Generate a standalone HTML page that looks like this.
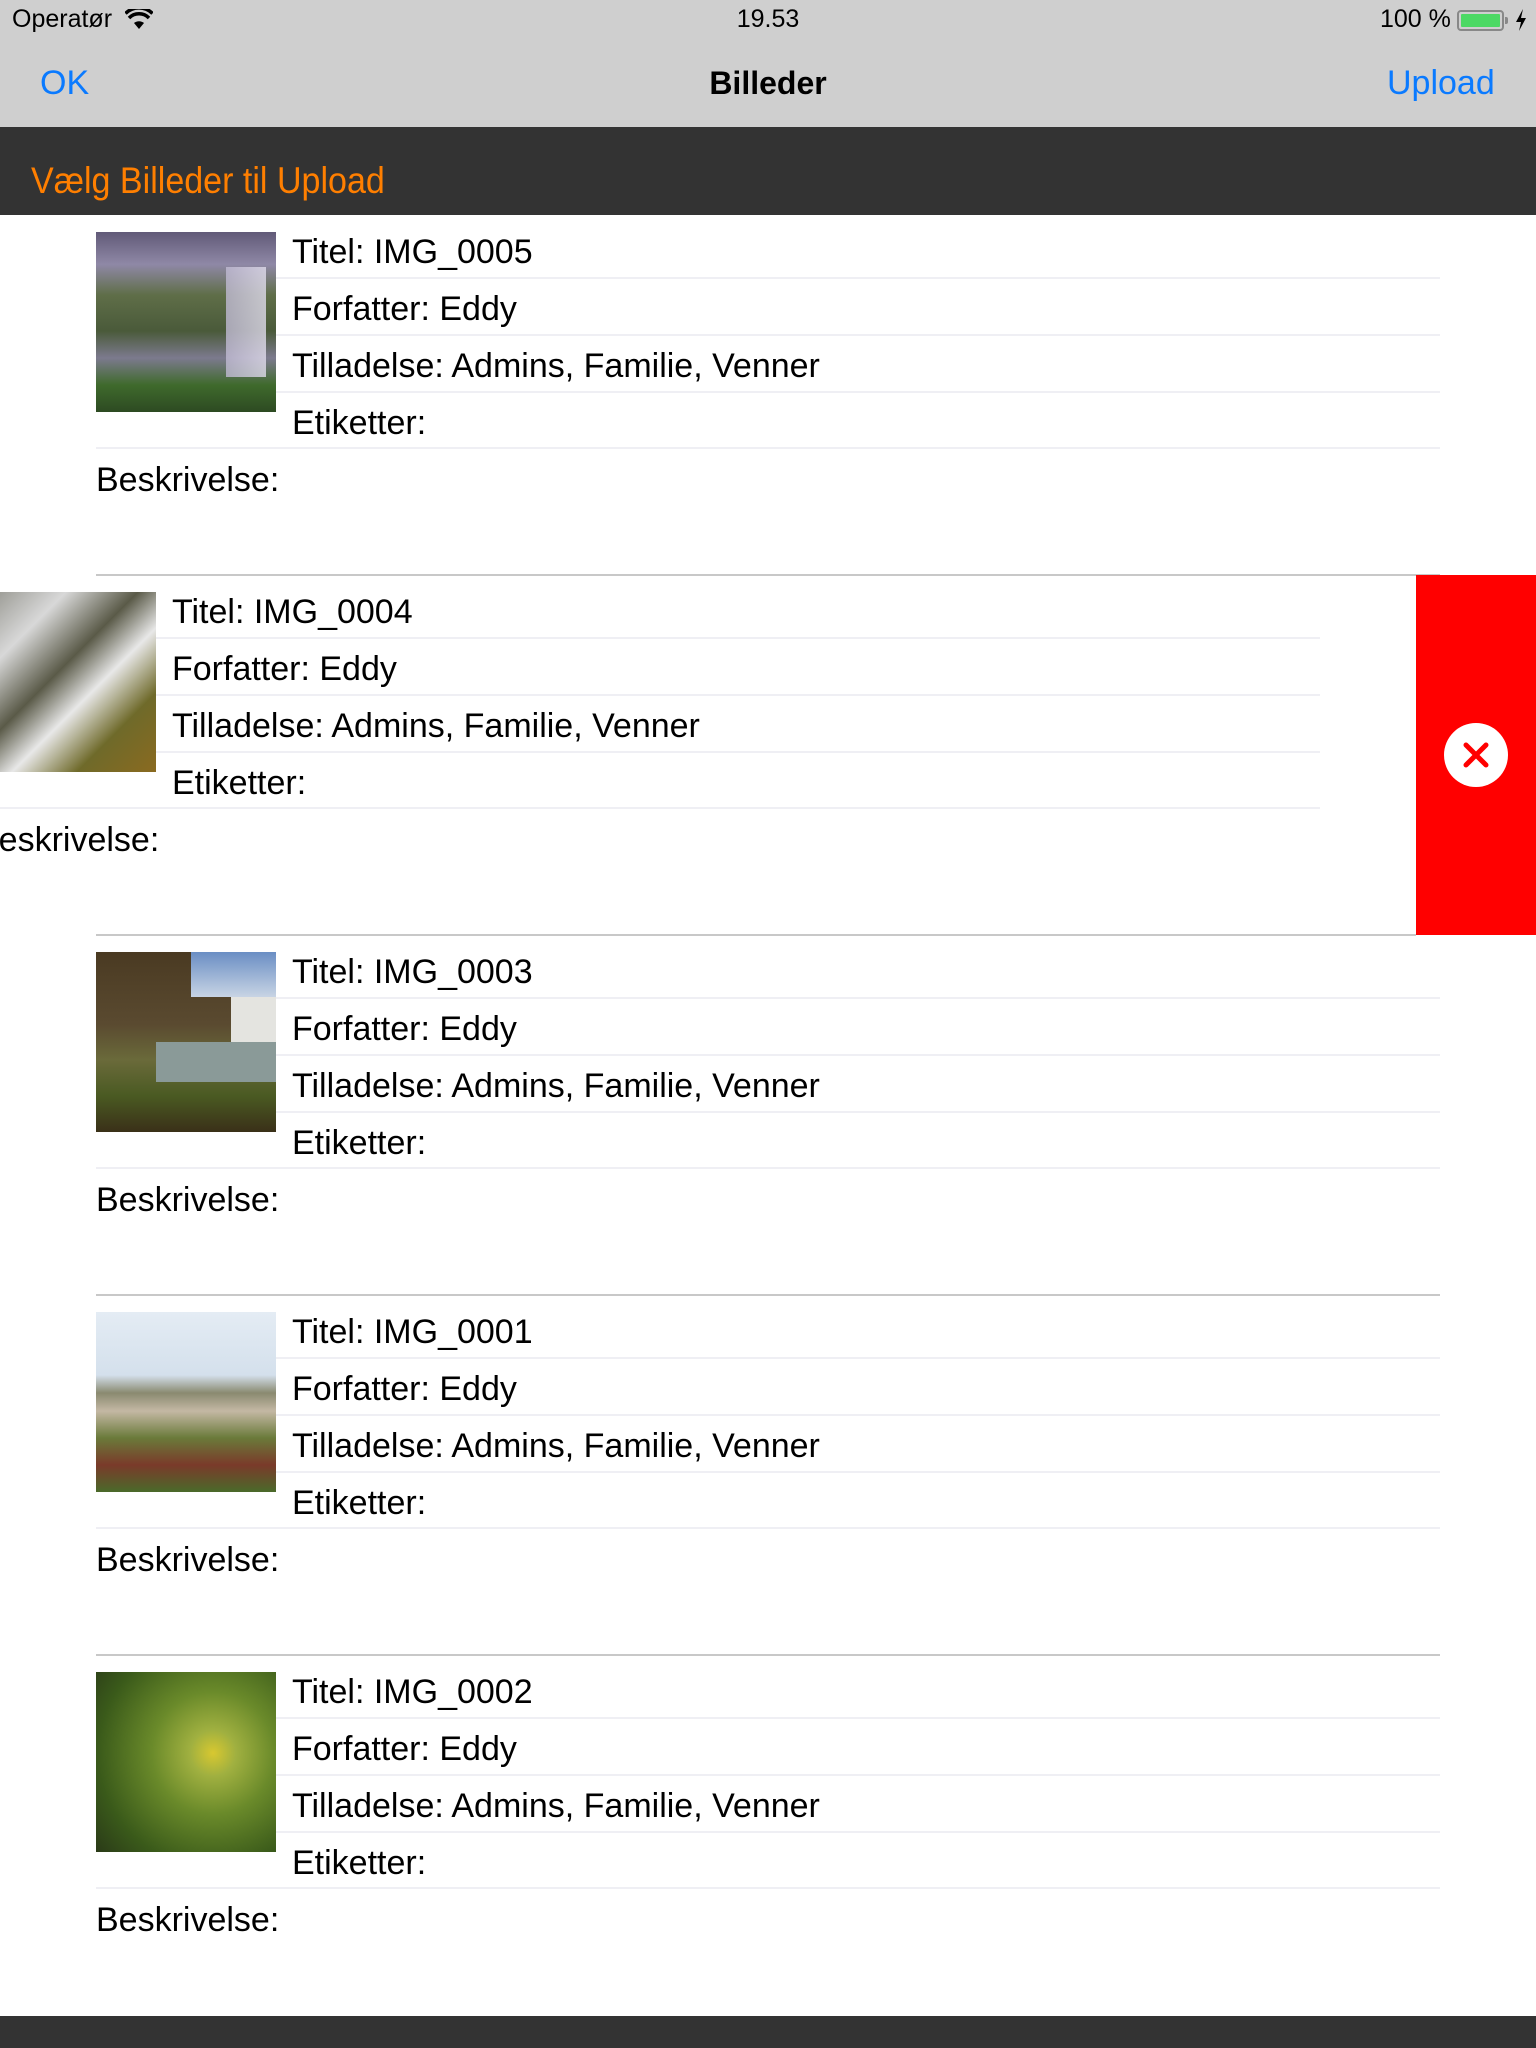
<!DOCTYPE html>
<html><head><meta charset="utf-8"><style>
*{margin:0;padding:0;box-sizing:border-box}
body{width:1536px;height:2048px;position:relative;overflow:hidden;background:#fff;font-family:"Liberation Sans",sans-serif;color:#000}
.a{position:absolute}
.t{position:absolute;font-size:34px;line-height:40px;white-space:nowrap}
.ln{position:absolute;height:2px;background:#efeff4}
.sep{position:absolute;height:2px;background:#c8c8c8;left:96px;width:1344px}
.img{position:absolute;width:180px;height:180px}
</style></head><body>
<div class="a" style="left:0;top:0;width:1536px;height:127px;background:#cfcfcf"></div>
<div class="a" style="left:12px;top:5px;font-size:25px">Operatør</div>
<svg class="a" style="left:125px;top:9px" width="28" height="22" viewBox="0 0 28 22"><path d="M14 20 L9 14 A8 8 0 0 1 19 14 Z" fill="#000"/><path d="M4 9 A14 14 0 0 1 24 9" stroke="#000" stroke-width="3.5" fill="none"/><path d="M0.5 4.5 A19 19 0 0 1 27.5 4.5" stroke="#000" stroke-width="3.5" fill="none"/></svg>
<div class="a" style="left:735px;top:5px;font-size:25px;width:66px;text-align:center">19.53</div>
<div class="a" style="left:1380px;top:5px;font-size:25px">100 %</div>
<div class="a" style="left:1457px;top:10px;width:47px;height:21px;border:2px solid #888;border-radius:4px;padding:2px"><div style="width:100%;height:100%;background:#4cd964;border-radius:1px"></div></div>
<div class="a" style="left:1505px;top:17px;width:3px;height:7px;background:#888;border-radius:0 2px 2px 0"></div>
<svg class="a" style="left:1515px;top:9px" width="12" height="22" viewBox="0 0 12 22"><path d="M8 0 L1 13 H6 L4 22 L11 9 H6 Z" fill="#000"/></svg>
<div class="a" style="left:40px;top:64px;font-size:34px;color:#0a7aff">OK</div>
<div class="a" style="left:0;width:1536px;text-align:center;top:65px;font-size:32px;font-weight:bold">Billeder</div>
<div class="a" style="left:1387px;top:64px;font-size:34px;color:#0a7aff">Upload</div>
<div class="a" style="left:0;top:127px;width:1536px;height:88px;background:#333"></div>
<div class="a" style="left:31px;top:160px;font-size:37px;color:#ff7f00;transform:scaleX(0.92);transform-origin:left">Vælg Billeder til Upload</div>

<div class="a" style="left:0;top:215px;width:1536px;height:360px">
<div class="img" style="left:96px;top:17px;background:linear-gradient(180deg,#615a78 0%,#8f88a6 18%,#5f6e48 35%,#4a5a3a 55%,#7c7a8e 70%,#3f6a2c 85%,#2d4a22 100%)"><div class="a" style="left:130px;top:35px;width:40px;height:110px;background:linear-gradient(90deg,#bfb9d2,#e0dcec);opacity:.8"></div></div>
<div class="t" style="left:292px;top:17px">Titel: IMG_0005</div><div class="ln" style="left:276px;top:62px;width:1164px"></div>
<div class="t" style="left:292px;top:74px">Forfatter: Eddy</div><div class="ln" style="left:276px;top:119px;width:1164px"></div>
<div class="t" style="left:292px;top:131px">Tilladelse: Admins, Familie, Venner</div><div class="ln" style="left:276px;top:176px;width:1164px"></div>
<div class="t" style="left:292px;top:188px">Etiketter:</div><div class="ln" style="left:96px;top:232px;width:1344px"></div>
<div class="t" style="left:96px;top:245px">Beskrivelse:</div>
</div>
<div class="sep" style="top:574px"></div>

<div class="a" style="left:0;top:575px;width:1536px;height:360px">
<div class="a" style="left:1416px;top:0;width:120px;height:360px;background:#ff0000"></div>
<div class="a" style="left:1444px;top:148px;width:64px;height:64px;border-radius:50%;background:#fff"></div>
<svg class="a" style="left:1462px;top:166px" width="28" height="28" viewBox="0 0 28 28"><path d="M4 4 L24 24 M24 4 L4 24" stroke="#ff0000" stroke-width="5" stroke-linecap="round"/></svg>
<div class="img" style="left:-24px;top:17px;background:linear-gradient(135deg,#8a8a82 0%,#d8d8d8 25%,#5a5a48 45%,#e8e8e8 60%,#6f6a2a 78%,#8a6a20 100%)"></div>
<div class="t" style="left:172px;top:17px">Titel: IMG_0004</div><div class="ln" style="left:156px;top:62px;width:1164px"></div>
<div class="t" style="left:172px;top:74px">Forfatter: Eddy</div><div class="ln" style="left:156px;top:119px;width:1164px"></div>
<div class="t" style="left:172px;top:131px">Tilladelse: Admins, Familie, Venner</div><div class="ln" style="left:156px;top:176px;width:1164px"></div>
<div class="t" style="left:172px;top:188px">Etiketter:</div><div class="ln" style="left:0;top:232px;width:1320px"></div>
<div class="t" style="left:-24px;top:245px">Beskrivelse:</div>
</div>
<div class="sep" style="top:934px;width:1320px"></div>

<div class="a" style="left:0;top:935px;width:1536px;height:360px">
<div class="img" style="left:96px;top:17px;background:linear-gradient(180deg,#4a3a22 0%,#5a4a30 40%,#6a6a3a 60%,#4a5a22 80%,#3a3018 100%)"><div class="a" style="left:95px;top:0;width:85px;height:45px;background:linear-gradient(180deg,#6a8ec4,#c8d4e4)"></div><div class="a" style="left:135px;top:45px;width:45px;height:45px;background:#e4e4e0"></div><div class="a" style="left:60px;top:90px;width:120px;height:40px;background:#8a9a98"></div></div>
<div class="t" style="left:292px;top:17px">Titel: IMG_0003</div><div class="ln" style="left:276px;top:62px;width:1164px"></div>
<div class="t" style="left:292px;top:74px">Forfatter: Eddy</div><div class="ln" style="left:276px;top:119px;width:1164px"></div>
<div class="t" style="left:292px;top:131px">Tilladelse: Admins, Familie, Venner</div><div class="ln" style="left:276px;top:176px;width:1164px"></div>
<div class="t" style="left:292px;top:188px">Etiketter:</div><div class="ln" style="left:96px;top:232px;width:1344px"></div>
<div class="t" style="left:96px;top:245px">Beskrivelse:</div>
</div>
<div class="sep" style="top:1294px"></div>

<div class="a" style="left:0;top:1295px;width:1536px;height:360px">
<div class="img" style="left:96px;top:17px;background:linear-gradient(180deg,#e4ecf4 0%,#d4e0ec 35%,#8a8a70 45%,#c4b8a4 55%,#6a7a3a 70%,#7a3a2a 85%,#4a6a2a 100%)"></div>
<div class="t" style="left:292px;top:17px">Titel: IMG_0001</div><div class="ln" style="left:276px;top:62px;width:1164px"></div>
<div class="t" style="left:292px;top:74px">Forfatter: Eddy</div><div class="ln" style="left:276px;top:119px;width:1164px"></div>
<div class="t" style="left:292px;top:131px">Tilladelse: Admins, Familie, Venner</div><div class="ln" style="left:276px;top:176px;width:1164px"></div>
<div class="t" style="left:292px;top:188px">Etiketter:</div><div class="ln" style="left:96px;top:232px;width:1344px"></div>
<div class="t" style="left:96px;top:245px">Beskrivelse:</div>
</div>
<div class="sep" style="top:1654px"></div>

<div class="a" style="left:0;top:1655px;width:1536px;height:360px">
<div class="img" style="left:96px;top:17px;background:radial-gradient(circle at 65% 45%,#d8c830 0%,#a0b040 15%,#6a8a2a 40%,#3a5a1a 75%,#2a3a18 100%)"></div>
<div class="t" style="left:292px;top:17px">Titel: IMG_0002</div><div class="ln" style="left:276px;top:62px;width:1164px"></div>
<div class="t" style="left:292px;top:74px">Forfatter: Eddy</div><div class="ln" style="left:276px;top:119px;width:1164px"></div>
<div class="t" style="left:292px;top:131px">Tilladelse: Admins, Familie, Venner</div><div class="ln" style="left:276px;top:176px;width:1164px"></div>
<div class="t" style="left:292px;top:188px">Etiketter:</div><div class="ln" style="left:96px;top:232px;width:1344px"></div>
<div class="t" style="left:96px;top:245px">Beskrivelse:</div>
</div>
<div class="a" style="left:0;top:2016px;width:1536px;height:32px;background:#333"></div>
</body></html>
